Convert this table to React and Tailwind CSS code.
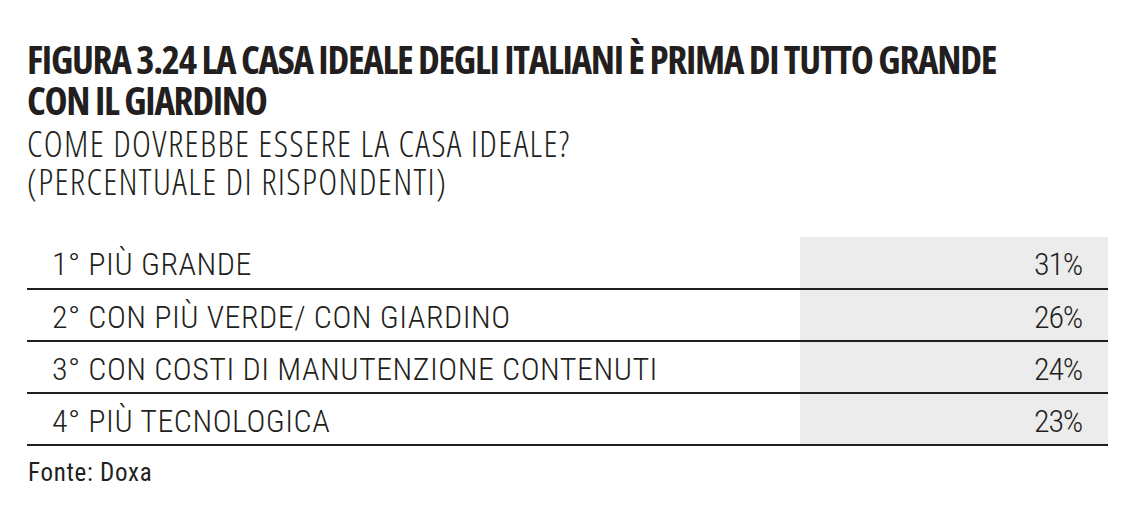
const rows = [
  { label: "1° PIÙ GRANDE", value: "31%" },
  { label: "2° CON PIÙ VERDE/ CON GIARDINO", value: "26%" },
  { label: "3° CON COSTI DI MANUTENZIONE CONTENUTI", value: "24%" },
  { label: "4° PIÙ TECNOLOGICA", value: "23%" },
];

export default function App() {
  return (
    <div className="min-h-[522px] w-[1130px] bg-white pl-[27px] pt-[38px] text-[#231f20]">
      <h1 className="font-['Open_Sans',sans-serif] text-[39px] font-bold font-stretch-condensed leading-[41px] tracking-[-1.3px]">
        FIGURA 3.24 LA CASA IDEALE DEGLI ITALIANI È PRIMA DI TUTTO GRANDE
        <br />
        CON IL GIARDINO
      </h1>
      <p className="mt-[5px] font-['Open_Sans',sans-serif] text-[36px] font-light font-stretch-condensed leading-[38px] tracking-[1.35px]">
        COME DOVREBBE ESSERE LA CASA IDEALE?
        <br />
        (PERCENTUALE DI RISPONDENTI)
      </p>

      <div className="mt-[36px] w-[1081px] font-['Roboto',sans-serif] font-light font-stretch-condensed">
        {rows.map((row, i) => (
          <div
            key={row.label}
            className={`flex border-b-2 border-[#231f20] ${i === 0 ? "h-[53px]" : "h-[52px]"}`}
          >
            <div className="flex-1 pl-[25px] pt-[5px] text-[32px] leading-[45px] tracking-[0.5px]">{row.label}</div>
            <div className="w-[308px] bg-[#ececec] pr-[26px] pt-[5px] text-right text-[32px] leading-[45px] tracking-[-1.2px]">
              {row.value}
            </div>
          </div>
        ))}
      </div>

      <p className="mt-[12px] pl-[1px] font-['Roboto',sans-serif] text-[25px] font-normal font-stretch-condensed leading-[30px] tracking-[0.7px]">
        Fonte: Doxa
      </p>
    </div>
  );
}
